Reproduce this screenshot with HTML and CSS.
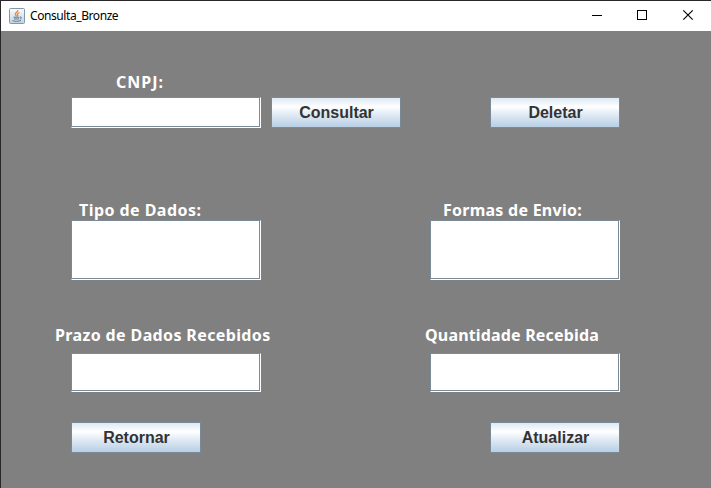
FILE: index.html
```html
<!DOCTYPE html>
<html lang="pt-BR">
<head>
<meta charset="utf-8">
<title>Consulta_Bronze</title>
<link rel="stylesheet" href="styles.css">
</head>
<body>
<div class="window">
  <header class="titlebar">
    <svg class="app-icon" width="16" height="16" viewBox="0 0 16 16">
      <defs><linearGradient id="tile" x1="0" y1="0" x2="0" y2="1"><stop offset="0" stop-color="#fafcfd"/><stop offset="1" stop-color="#c3d2df"/></linearGradient></defs>
      <rect x=".5" y=".5" width="15" height="15" rx="1" fill="url(#tile)" stroke="#8397aa"/>
      <path d="M8.800 2C9.300 4 5.600 4.700 6.400 6.500L7.500 8.300M10.500 4.500C8.200 5.300 8 6.200 8.800 7.200L8.500 8.300" fill="none" stroke="#e78632" stroke-width="1.300"/>
      <path d="M4.500 9.200H10.500M5 10.900H10M11 9C13.300 8.700 12.600 10.800 10.800 11M3.500 12.600C5.500 13.500 9.500 13.500 12 12.500" fill="none" stroke="#577b9c" stroke-width="1"/>
    </svg>
    <span class="title">Consulta_Bronze</span>
    <svg class="controls" width="138" height="30" viewBox="0 0 138 30" fill="none" stroke="#000">
      <path d="M19 14.500H29"/>
      <rect x="64.500" y="9.500" width="9" height="9"/>
      <path d="M110.300 9.300L119.700 18.700M119.700 9.300L110.300 18.700" stroke-width="1.150"/>
    </svg>
  </header>
  <main class="form">
    <div class="labels search-label"><label class="cnpj" for="cnpj">CNPJ:</label></div>
    <div class="row search"><input id="cnpj"><button class="beside">Consultar</button><button class="end">Deletar</button></div>
    <div class="labels data-labels"><label class="tipo" for="tipo">Tipo de Dados:</label><label class="formas" for="formas">Formas de Envio:</label></div>
    <div class="row data"><input id="tipo"><input id="formas" class="end"></div>
    <div class="labels result-labels"><label class="prazo" for="prazo">Prazo de Dados Recebidos</label><label class="quantidade" for="quantidade">Quantidade Recebida</label></div>
    <div class="row result"><input id="prazo"><input id="quantidade" class="end"></div>
    <div class="row actions"><button>Retornar</button><button class="end">Atualizar</button></div>
  </main>
</div>
</body>
</html>
```
FILE: styles.css
```css
* { box-sizing: border-box; }
body { margin: 0; }
.window {
  width: 711px;
  height: 488px;
  border-top: 1px solid #29272a;
  border-left: 1px solid #29272a;
  background: #808080;
  overflow: hidden;
}
.titlebar {
  height: 30px;
  display: flex;
  align-items: center;
  padding-left: 8px;
  background: #fff;
}
.title {
  margin-left: 5px;
  font: 12px/30px "Noto Sans", sans-serif;
  letter-spacing: -0.42px;
  color: #000;
}
.controls { margin-left: auto; }
.form { padding: 40px 91px 0 70px; }
.labels {
  display: grid;
  grid-template-columns: 359px 1fr;
  height: 22px;
  font: bold 16px/22px "Noto Sans", sans-serif;
  color: #fff;
  white-space: nowrap;
}
.row { display: flex; }
.end { margin-left: auto; }
.beside { margin-left: 10px; }
.search-label { margin-bottom: 4px; }
.search { height: 31px; }
.data-labels { margin-top: 71px; }
.data { height: 60px; margin-top: -1px; }
.result-labels { margin-top: 44px; }
.result { height: 39px; margin-top: 7px; }
.actions { height: 31px; margin-top: 30px; }
.cnpj { padding-left: 45px; letter-spacing: 1px; }
.tipo { padding-left: 8px; letter-spacing: 0.45px; }
.formas { padding-left: 13px; letter-spacing: 0.25px; }
.prazo { margin-left: -16px; letter-spacing: 0.37px; }
.quantidade { margin-left: -5px; letter-spacing: 0.17px; }
input {
  width: 190px;
  height: 100%;
  padding: 2px;
  border: 1px solid #fff;
  border-top-color: #7a8a99;
  border-left-color: #7a8a99;
  border-radius: 0;
  outline: 0;
  background: #fff;
  box-shadow: inset -1px -1px #7a8a99;
}
button {
  width: 130px;
  height: 100%;
  padding: 0 0 0 1px;
  border: 1px solid #7a8a99;
  border-radius: 0;
  background: linear-gradient(#dde8f3, #fff 30%, #dde8f3 60%, #b8cfe5);
  color: #333;
  font: bold 16px/29px "Liberation Sans", Arial, sans-serif;
}
```
